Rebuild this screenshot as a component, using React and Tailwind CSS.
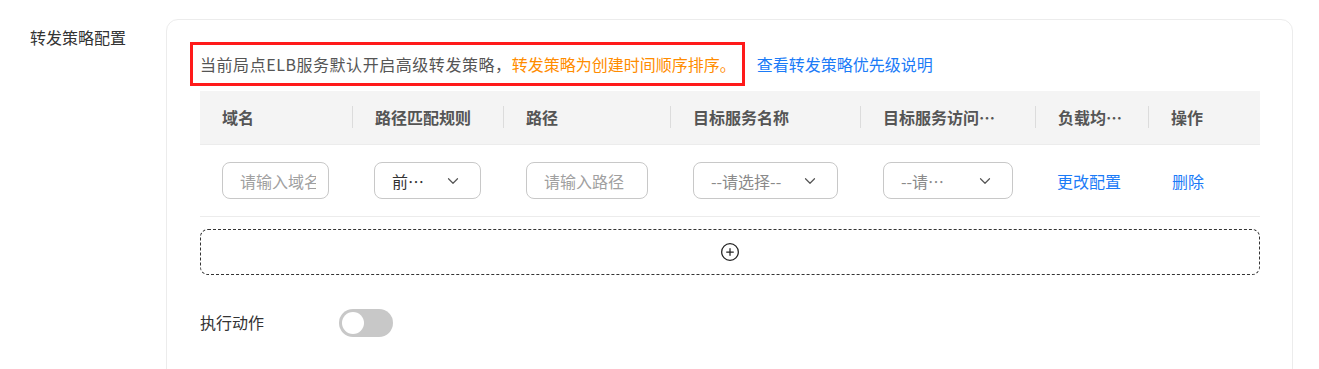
import React, { useState } from 'react';
import { ChevronDown, CirclePlus } from 'lucide-react';

const FONT = { fontFamily: '"Noto Sans CJK SC", "Noto Sans", sans-serif' };

const COLS = [
  { label: '域名', w: 'w-[152px]' },
  { label: '路径匹配规则', w: 'w-[151px]' },
  { label: '路径', w: 'w-[167px]' },
  { label: '目标服务名称', w: 'w-[190px]' },
  { label: '目标服务访问…', w: 'w-[175px]' },
  { label: '负载均…', w: 'w-[113px]' },
  { label: '操作', w: 'w-[112px]' },
];

const TextBox = ({ placeholder, width }) => (
  <div className={`h-[37px] ${width} rounded-lg border border-[#c8c8c8] bg-white pl-[17px] pr-[12px] flex items-center overflow-hidden whitespace-nowrap text-[16px] text-[#a0a0a0]`}>
    <span className="overflow-hidden">{placeholder}</span>
  </div>
);

const SelectBox = ({ value, width, muted }) => (
  <div className={`h-[37px] ${width} rounded-lg border border-[#c8c8c8] bg-white pl-[17px] pr-[18px] flex items-center justify-between whitespace-nowrap text-[16px] ${muted ? 'text-[#8a8a8a]' : 'text-[#333]'}`}>
    <span>{value}</span>
    <ChevronDown size={18} strokeWidth={1.6} className="text-[#555]" />
  </div>
);

export default function App() {
  const [on, setOn] = useState(false);

  return (
    <div className="min-h-[369px] bg-white flex items-start pt-[19px] pl-[30px] overflow-hidden" style={FONT}>
      <div className="w-[136px] shrink-0 pt-[6px] text-[16px] text-[#333]">转发策略配置</div>

      <div className="w-[1127px] h-[380px] rounded-xl border border-[#ececec] pl-[33px] pr-[32px] pt-[22px]">
        {/* tip */}
        <div className="flex items-center -ml-[10px]">
          <div className="h-[44px] border-[3px] border-[#ff1a1a] pl-[7px] pr-[6px] flex items-center text-[16px] whitespace-nowrap">
            <span className="text-[#555] tracking-[0.55px]">当前局点ELB服务默认开启高级转发策略，</span>
            <span className="text-[#ff8c00]">转发策略为创建时间顺序排序。</span>
          </div>
          <a href="#" className="ml-[12px] text-[16px] text-[#1b7bf7]">查看转发策略优先级说明</a>
        </div>

        {/* table */}
        <div className="mt-[5px]">
          <div className="flex h-[54px] bg-[#f4f4f4] border-b border-[#ececec]">
            {COLS.map((c, i) => (
              <div key={c.label} className={`${c.w} flex items-center pb-[2px]`}>
                {i > 0 && <div className="w-px h-[22px] bg-[#dcdcdc]" />}
                <span className="pl-[22px] text-[16px] font-bold text-[#555] whitespace-nowrap">{c.label}</span>
              </div>
            ))}
          </div>
          <div className="flex h-[72px] items-center border-b border-[#ececec]">
            <div className="w-[152px] pl-[22px]"><TextBox placeholder="请输入域名" width="w-[107px]" /></div>
            <div className="w-[151px] pl-[22px]"><SelectBox value="前…" width="w-[107px]" /></div>
            <div className="w-[167px] pl-[23px]"><TextBox placeholder="请输入路径" width="w-[122px]" /></div>
            <div className="w-[190px] pl-[23px]"><SelectBox value="--请选择--" width="w-[145px]" muted /></div>
            <div className="w-[175px] pl-[23px]"><SelectBox value="--请…" width="w-[130px]" muted /></div>
            <div className="w-[113px] pl-[22px]"><a href="#" className="text-[16px] text-[#1b7bf7] whitespace-nowrap">更改配置</a></div>
            <div className="w-[112px] pl-[24px]"><a href="#" className="text-[16px] text-[#1b7bf7]">删除</a></div>
          </div>
        </div>

        {/* add row */}
        <button className="mt-[12px] w-full h-[46px] rounded-lg border border-dashed border-[#333] flex items-center justify-center">
          <CirclePlus size={20} strokeWidth={1.5} className="text-[#222]" />
        </button>

        {/* action */}
        <div className="mt-[34px] flex items-center">
          <span className="w-[139px] text-[16px] text-[#333] pb-[3px]">执行动作</span>
          <button
            onClick={() => setOn(!on)}
            className={`w-[54px] h-[28px] rounded-full p-[3px] flex items-center ${on ? 'bg-[#1b7bf7] justify-end' : 'bg-[#c8c8c8] justify-start'}`}
          >
            <span className="w-[22px] h-[22px] rounded-full bg-white" />
          </button>
        </div>
      </div>
    </div>
  );
}
